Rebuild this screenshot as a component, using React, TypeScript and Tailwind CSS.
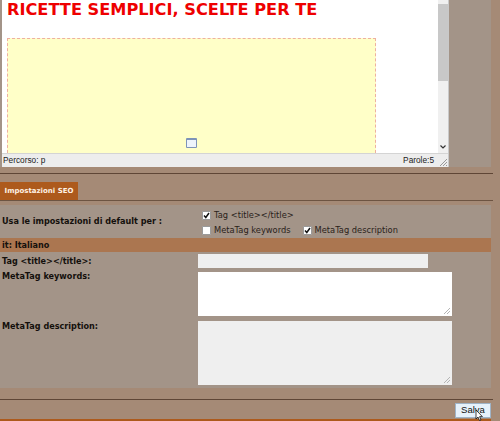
import React from "react";

function Check({ on }: { on?: boolean }) {
  return (
    <span className="w-[9px] h-[9px] bg-white rounded-[1px] border border-[#9a9a9a] flex items-center justify-center shrink-0">
      {on && (
        <svg width="7" height="7" viewBox="0 0 7 7">
          <path d="M1 3.5 L2.8 5.5 L6 1" fill="none" stroke="#111" strokeWidth="1.5" />
        </svg>
      )}
    </span>
  );
}

function Grip() {
  return (
    <svg width="9" height="9" viewBox="0 0 9 9" className="absolute right-[1px] bottom-[1px]">
      <path d="M8 2 L2 8 M8 5 L5 8" stroke="#b5b5b5" strokeWidth="1" />
    </svg>
  );
}

export default function App() {
  const verdana = "font-['DejaVu_Sans',Verdana,sans-serif]";
  return (
    <div className={`w-[500px] h-[421px] overflow-hidden bg-[#a58a76] ${verdana} text-[#14100c] flex flex-col`}>
      {/* Editor row */}
      <div className="flex h-[167px] shrink-0 w-[491px] bg-[#a39488]">
        <div className="w-[2px] shrink-0" />
        <div className="w-[447px] flex flex-col bg-white border-r border-[#c9c9c9]">
          <div className="h-[153px] flex">
            <div className="flex-1 min-w-0 overflow-hidden pl-[5px] flex flex-col">
              <div className="h-[38px] shrink-0 pt-[1px] font-bold text-[#ee0000] text-[16.2px] leading-[17px] whitespace-nowrap">
                RICETTE SEMPLICI, SCELTE PER TE
              </div>
              <div className="relative w-[369px] flex-1 bg-[#ffffc8] border border-b-0 border-dashed border-[#eeb0a0]">
                <span className="absolute left-[178px] top-[99px] w-[11px] h-[10px] rounded-[1px] border border-[#7e94b8] border-t-[2px] bg-[#eef4fb]" />
              </div>
            </div>
            <div className="w-[10px] shrink-0 bg-[#f0f0f0] flex flex-col">
              <div className="h-[4px]" />
              <div className="h-[77px] bg-[#c8c8c8]" />
              <div className="flex-1" />
              <svg width="10" height="8" viewBox="0 0 10 8" className="mb-[2px]">
                <path d="M2.5 2.5 L5 5 L7.5 2.5" fill="none" stroke="#333" strokeWidth="1.2" />
              </svg>
            </div>
          </div>
          <div className="relative h-[14px] bg-[#ededed] border-t border-[#d4d4d4] flex justify-between items-center pl-[1px] pr-[14px] font-['Liberation_Sans',Arial,sans-serif] text-[8.3px] text-[#222]">
            <span>Percorso: p</span>
            <span>Parole:5</span>
            <svg width="9" height="9" viewBox="0 0 9 9" className="absolute right-0 bottom-0">
              <path d="M8 1 L1 8 M8 4 L4 8 M8 7 L7 8" stroke="#999" strokeWidth="1" />
            </svg>
          </div>
        </div>
      </div>

      {/* Divider */}
      <div className="mt-[6px] h-[1px] w-[493px] shrink-0 bg-[#5f4636]" />

      {/* Tab */}
      <div className="mt-[8px] h-[18px] w-[78px] shrink-0 bg-[#ad5a1c] flex items-center justify-center font-bold text-[7px] text-[#fff2e4] whitespace-nowrap">
        Impostazioni SEO
      </div>
      <div className="h-[1px] w-[493px] shrink-0 bg-[#6d5442]" />

      {/* Form */}
      <div className="mt-[4px] w-[491px] shrink-0 bg-[#a39488] flex flex-col text-[8.3px]">
        <div className="flex h-[33px]">
          <div className="w-[197px] shrink-0 pl-[2px] flex items-center font-bold text-[8.1px]">
            Usa le impostazioni di default per :
          </div>
          <div className="flex-1 flex flex-col pl-[5px] pt-[3px] text-[#2a221a]">
            <div className="flex items-center gap-[3px] h-[15px]">
              <Check on />
              <span>{"Tag <title></title>"}</span>
            </div>
            <div className="flex items-center gap-[3px] h-[16px]">
              <Check />
              <span>MetaTag keywords</span>
              <span className="w-[6px]" />
              <Check on />
              <span>MetaTag description</span>
            </div>
          </div>
        </div>
        <div className="h-[14px] bg-[#ab7650] pl-[2px] flex items-center font-bold text-[8.1px]">it: Italiano</div>
        <div className="flex h-[20px] items-start">
          <div className="w-[198px] shrink-0 pl-[2px] pt-[4px] font-bold text-[8.1px] leading-[10px]">{"Tag <title></title>:"}</div>
          <div className="w-[230px] h-[14px] mt-[2px] bg-[#efefef]" />
        </div>
        <div className="flex h-[49px]">
          <div className="w-[198px] shrink-0 pl-[2px] font-bold text-[8.1px] leading-[10px] -mt-[1px]">MetaTag keywords:</div>
          <div className="relative w-[254px] h-[44px] bg-white">
            <Grip />
          </div>
        </div>
        <div className="flex h-[67px]">
          <div className="w-[198px] shrink-0 pl-[2px] font-bold text-[8.1px] leading-[10px]">MetaTag description:</div>
          <div className="relative w-[254px] h-[64px] bg-[#efefef]">
            <Grip />
          </div>
        </div>
      </div>

      {/* Footer */}
      <div className="mt-[11px] h-[1px] w-[493px] shrink-0 bg-[#5f4636]" />
      <div className="flex justify-end w-[491px] mt-[3px] shrink-0">
        <div className="relative w-[36px] h-[15px] bg-[#e6f1fb] border border-[#9fb4c8] flex items-center justify-center font-['Liberation_Sans',Arial,sans-serif] text-[9.5px] text-[#111]">
          Salva
          <svg width="9" height="13" viewBox="0 0 9 13" className="absolute left-[19px] top-[5px]">
            <path d="M1 1 L1 10 L3 8 L4.5 11.5 L6 11 L4.6 7.6 L7.4 7.6 Z" fill="#fff" stroke="#111" strokeWidth="0.8" />
          </svg>
        </div>
      </div>
      <div className="mt-[1px] h-[2px] w-[491px] shrink-0 bg-[#ad5a1c]" />
    </div>
  );
}
